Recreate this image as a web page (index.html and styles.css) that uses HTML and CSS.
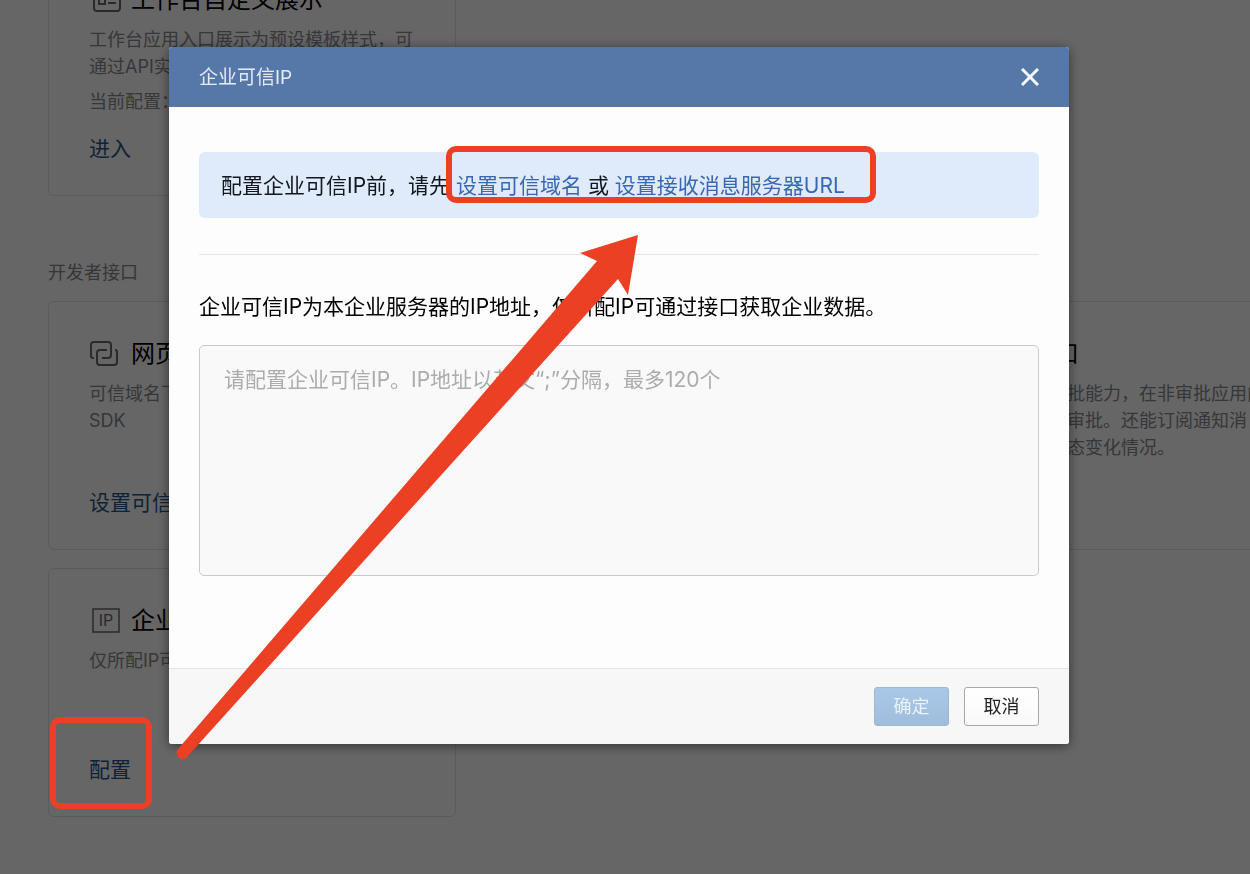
FILE: index.html
```html
<!DOCTYPE html>
<html lang="zh-CN">
<head>
<meta charset="utf-8">
<meta name="viewport" content="width=device-width, initial-scale=1">
<title>企业可信IP</title>
<link rel="stylesheet" href="styles.css">
</head>
<body>
<main class="page">
  <section class="card-grid">
    <article class="card">
      <h3 class="card-title">
        <svg class="card-icon" viewBox="0 0 32 32" aria-hidden="true"><rect x="5" y="3" width="26" height="24" rx="3"/><rect x="10" y="13" width="6" height="7"/><path d="M10 8h17M19 14h8M19 19h8"/></svg>
        工作台自定义展示
      </h3>
      <p class="card-desc">工作台应用入口展示为预设模板样式，可<br>通过API实现</p>
      <p class="card-state">当前配置：</p>
      <a class="card-link" href="#">进入</a>
    </article>
  </section>

  <h2 class="section-title">开发者接口</h2>
  <section class="card-grid">
    <article class="card">
      <h3 class="card-title">
        <svg class="card-icon" viewBox="0 0 32 32" aria-hidden="true"><path d="M5 20h-1a2 2 0 0 1-2-2V7a3 3 0 0 1 3-3h14a3 3 0 0 1 3 3v10a3 3 0 0 1-3 3h-6"/><path d="M26 12a2 2 0 0 1 2 2v10a3 3 0 0 1-3 3H11a3 3 0 0 1-3-3v-9a3 3 0 0 1 3-3h7"/></svg>
        网页授权
      </h3>
      <p class="card-desc">可信域名下的网页可使用JS-<br>SDK</p>
      <a class="card-link" href="#">设置可信域名</a>
    </article>
    <article class="card card-last">
      <h3 class="card-title">
        <svg class="card-icon" viewBox="0 0 32 32" aria-hidden="true"><rect x="4" y="4" width="26" height="24"/></svg>
        审批接口
      </h3>
      <p class="card-desc">自建应用接入审批能力，在非审批应用内<br>设置流程、发起审批。还能订阅通知消<br>息，获取审批状态变化情况。</p>
    </article>
    <article class="card">
      <h3 class="card-title">
        <svg class="card-icon icon-ip" viewBox="0 0 32 32" aria-hidden="true"><rect x="4" y="4" width="26" height="23"/><text x="17" y="21" text-anchor="middle">IP</text></svg>
        企业可信IP
      </h3>
      <p class="card-desc">仅所配IP可通过接口获取数据</p>
      <a class="card-link" href="#">配置</a>
    </article>
  </section>
</main>

<div class="overlay">
  <div class="dialog" role="dialog" aria-modal="true" aria-labelledby="dialog-title">
    <header class="dialog-head">
      <h1 id="dialog-title" class="dialog-title">企业可信IP</h1>
      <button class="dialog-close" type="button" aria-label="关闭"><svg viewBox="0 0 18 18" aria-hidden="true"><path d="M1 1l16 16M17 1L1 17"/></svg></button>
    </header>
    <div class="dialog-body">
      <p class="notice">配置企业可信IP前，请先 <a href="#">设置可信域名</a> 或 <a href="#">设置接收消息服务器URL</a></p>
      <hr class="divider">
      <label class="ip-label" for="ip-list">企业可信IP为本企业服务器的IP地址，仅所配IP可通过接口获取企业数据。</label>
      <textarea id="ip-list" class="ip-input" placeholder="请配置企业可信IP。IP地址以英文“;”分隔，最多120个"></textarea>
    </div>
    <footer class="dialog-foot">
      <button class="btn btn-primary" type="button">确定</button>
      <button class="btn" type="button">取消</button>
    </footer>
  </div>
</div>

<svg class="marks" width="1250" height="874" viewBox="0 0 1250 874" aria-hidden="true">
  <rect x="449" y="149" width="424" height="51" rx="7"/>
  <rect x="53" y="720" width="96" height="86" rx="7"/>
  <path class="arrow" d="M638 235L580 253L597 261L178 749A6 6 0 0 0 187 757L618 279L628 295Z"/>
</svg>
</body>
</html>
```

FILE: styles.css
```css
* {
  box-sizing: border-box;
}

body {
  margin: 0;
  height: 100vh;
  overflow: hidden;
  background: #fff;
  color: #000;
  font-family: Inter, "Noto Sans CJK SC", sans-serif;
  font-size: 18px;
}

h1, h2, h3, p {
  margin: 0;
  font-weight: 400;
}

a {
  text-decoration: none;
}

/* Page behind the dialog, scrolled part of a card out of view */
.page {
  margin-top: -53px;
  padding-left: 48px;
}

.card-grid {
  display: grid;
  grid-template-columns: repeat(3, 408px);
  grid-auto-rows: minmax(249px, auto);
  gap: 18px;
}

.card {
  display: flex;
  flex-direction: column;
  padding: 34px 40px 31px;
  border: 1px solid #e1e3e7;
  border-radius: 6px;
}

.card-last {
  grid-column: 3;
}

.card-title {
  display: flex;
  align-items: center;
  gap: 10px;
  font-size: 24px;
  line-height: 36px;
}

.card-icon {
  width: 32px;
  height: 32px;
  fill: none;
  stroke: #6a6a6a;
  stroke-width: 2;
}

.icon-ip {
  stroke-width: 1.5;
}

.icon-ip text {
  fill: #6a6a6a;
  stroke: none;
  font-size: 16px;
}

.card-desc,
.card-state {
  margin-top: 8px;
  margin-right: -2px;
  color: #878a90;
  line-height: 27px;
}

.card-link {
  margin-top: auto;
  color: #2a5584;
  font-size: 21px;
  line-height: 30px;
}

.section-title {
  margin: 63px 0 15px;
  color: #878a90;
  font-size: 18px;
  line-height: 27px;
}

/* Dialog */
.overlay {
  position: fixed;
  inset: 0;
  display: flex;
  justify-content: center;
  align-items: flex-start;
  padding: 47px 12px 0 0;
  background: rgba(0, 0, 0, 0.6);
}

.dialog {
  width: 900px;
  overflow: hidden;
  border-radius: 3px;
  background: #fdfdfd;
  box-shadow: 0 2px 12px rgba(0, 0, 0, 0.5);
}

.dialog-head {
  display: flex;
  justify-content: space-between;
  align-items: center;
  height: 60px;
  padding: 0 30px;
  background: #5678a9;
}

.dialog-title {
  color: #e4ebf5;
  font-size: 19px;
  line-height: 32px;
  padding-top: 2px;
}

.dialog-close {
  display: flex;
  padding: 0;
  border: 0;
  background: none;
}

.dialog-close svg {
  width: 18px;
  height: 18px;
  fill: none;
  stroke: #f4f8ff;
  stroke-width: 3;
}

.dialog-body {
  padding: 45px 30px 92px;
}

.notice {
  padding: 19px 22px 17px;
  border-radius: 6px;
  background: #dfeafa;
  color: #11161f;
  font-size: 21px;
  line-height: 30px;
}

.notice a {
  color: #3867b4;
}

.divider {
  height: 1px;
  margin: 36px 0 37px;
  border: 0;
  background: #e6e6e6;
}

.ip-label {
  display: block;
  font-size: 21px;
  line-height: 30px;
}

.ip-input {
  display: block;
  width: 100%;
  height: 231px;
  margin-top: 23px;
  padding: 19px 24px;
  border: 1px solid #c8cacc;
  border-radius: 5px;
  background: #f9f9f9;
  font: inherit;
  font-size: 21px;
  line-height: 30px;
  resize: none;
}

.ip-input::placeholder {
  color: #acacac;
}

.dialog-foot {
  display: flex;
  justify-content: flex-end;
  gap: 15px;
  padding: 18px 30px;
  border-top: 1px solid #e2e4e8;
  background: #f7f7f7;
}

.btn {
  width: 75px;
  height: 39px;
  padding: 0;
  border: 1px solid #a8a8a8;
  border-radius: 3px;
  background: linear-gradient(#fff, #f9f9f9);
  color: #222;
  font: inherit;
  line-height: 27px;
}

.btn-primary {
  border-color: #9bb8d7;
  background: linear-gradient(#a9c8e8, #a0bddb);
  color: #e9f3fd;
}

/* Hand-drawn highlight marks over the whole screen */
.marks {
  position: absolute;
  top: 0;
  left: 0;
  fill: none;
  stroke: #eb4024;
  stroke-width: 6;
  pointer-events: none;
}

.marks .arrow {
  fill: #eb4024;
  stroke: none;
}
```
